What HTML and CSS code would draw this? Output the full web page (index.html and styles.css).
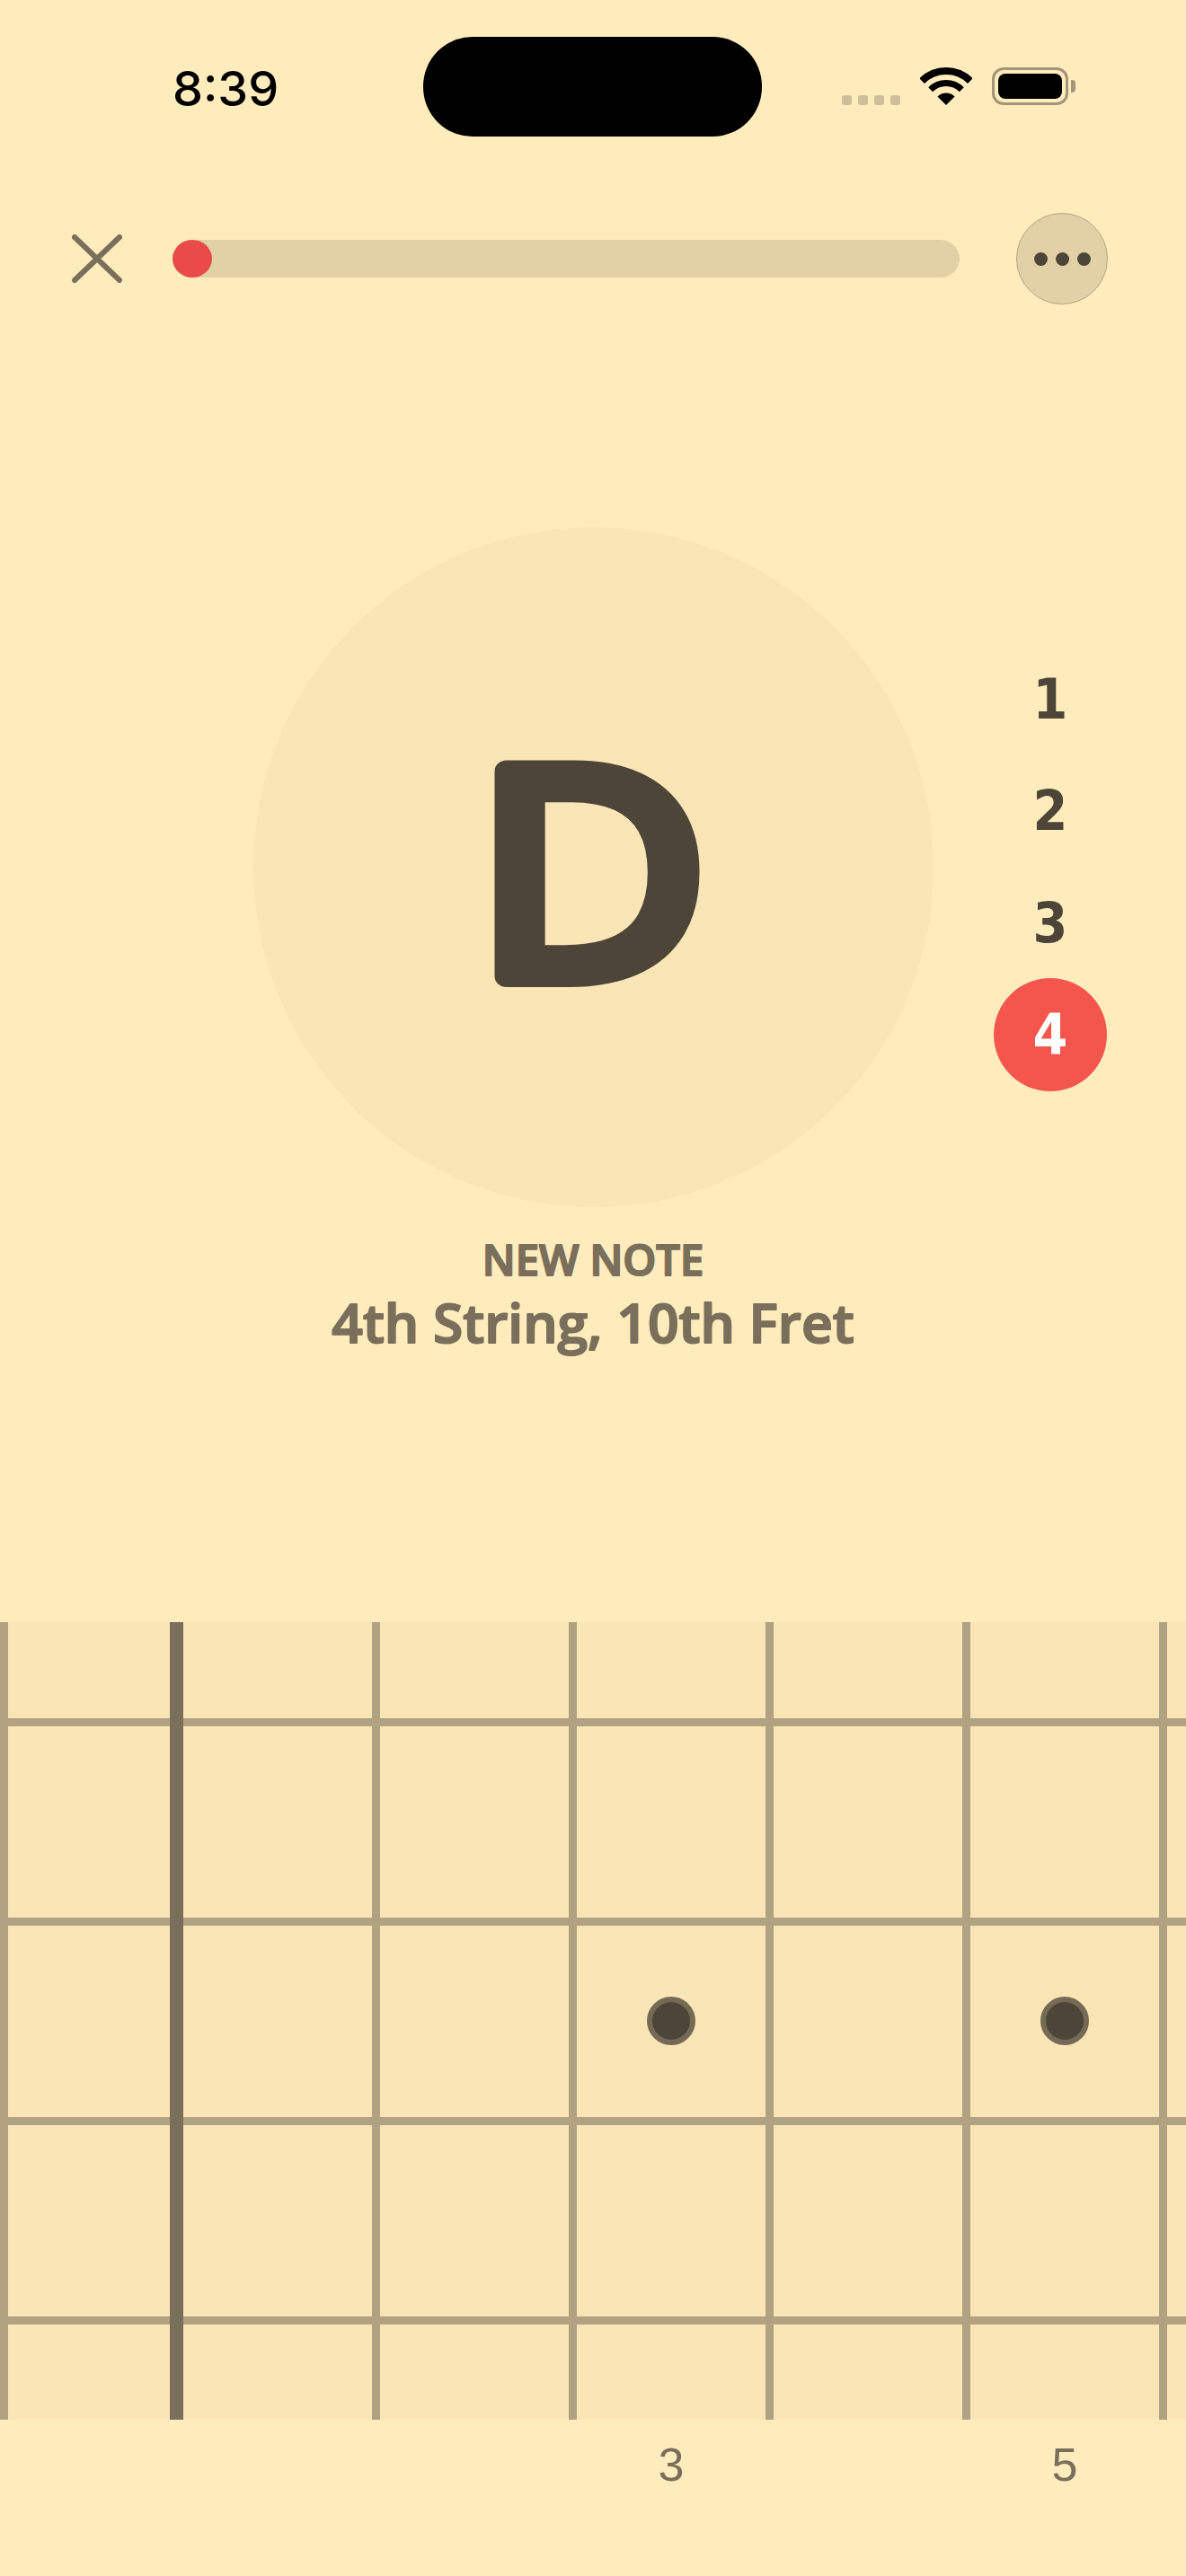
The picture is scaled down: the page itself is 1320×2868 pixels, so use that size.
FILE: index.html
```html
<!DOCTYPE html>
<html lang="en">
<head>
    <meta charset="UTF-8">
    <meta name="viewport" content="width=device-width, initial-scale=1.0">
    <title>Fretboard Trainer</title>
    <link rel="stylesheet" href="styles.css">
</head>
<body>
    <div class="status-bar">
        <div class="time">8:39</div>
        <div class="island"></div>
        <div class="status-icons">
            <div class="signal"><span></span><span></span><span></span><span></span></div>
            <svg class="wifi" viewBox="0 0 58 42">
                <path class="wifi-arc outer" d="M2.13 15.13A38 38 0 0 1 55.87 15.13"/>
                <path class="wifi-arc inner" d="M11.68 24.68A24.5 24.5 0 0 1 46.32 24.68"/>
                <path d="M29 42L19.45 32.45A13.5 13.5 0 0 1 38.55 32.45Z"/>
            </svg>
            <div class="battery"><div class="battery-fill"></div></div>
            <div class="battery-cap"></div>
        </div>
    </div>

    <div class="top-bar">
        <svg class="close" viewBox="0 0 56 54"><path d="M3 3L53 51M53 3L3 51"/></svg>
        <div class="progress"><div class="progress-dot"></div></div>
        <div class="more"><span></span><span></span><span></span></div>
    </div>

    <div class="main">
        <div class="note-row">
            <div class="note-circle">
                <svg class="note-letter" viewBox="0 0 757 757"><text transform="translate(376 500) scale(1.11 1)">D</text></svg>
            </div>
            <div class="string-list">
                <div class="string-num">1</div>
                <div class="string-num">2</div>
                <div class="string-num">3</div>
                <div class="string-num active">4</div>
            </div>
        </div>
        <svg class="note-text" viewBox="0 0 760 160">
            <text class="note-kind" x="380" y="50">NEW NOTE</text>
            <text class="note-place" x="380" y="125">4th String, 10th Fret</text>
        </svg>
    </div>

    <div class="fretboard">
        <div class="strings"><div></div><div></div><div></div><div></div></div>
        <div class="frets">
            <div class="open"></div>
            <div class="nut"></div>
            <div class="fret"></div>
            <div class="fret"></div>
            <div class="fret"><div class="inlay"></div></div>
            <div class="fret"></div>
            <div class="fret"><div class="inlay"></div></div>
            <div class="fret"></div>
        </div>
    </div>

    <div class="fret-numbers">
        <div class="fret-num">3</div>
        <div class="fret-num"></div>
        <div class="fret-num">5</div>
    </div>
</body>
</html>
```

FILE: styles.css
```css
* { box-sizing: border-box; margin: 0; padding: 0; }
html, body { width: 1320px; height: 2868px; overflow: hidden; }
body { background: #ffecbd; font-family: "Open Sans", sans-serif; display: flex; flex-direction: column; }

.status-bar { display: grid; grid-template-columns: 471px 377px 1fr; height: 152px; padding-top: 41px; }
.time { padding: 26px 0 0 192px; font: 500 54px/64px Inter, sans-serif; color: #000; }
.island { background: #000; height: 111px; border-radius: 55px; }
.status-icons { display: flex; align-items: flex-start; padding-top: 34px; }
.signal { display: flex; gap: 7px; margin: 31px 0 0 89px; }
.signal span { width: 11px; height: 11px; border-radius: 3px; background: #cfbf98; }
.wifi { width: 58px; height: 42px; margin-left: 22px; fill: #000; }
.wifi-arc { fill: none; stroke: #000; }
.wifi-arc.outer { stroke-width: 8; }
.wifi-arc.inner { stroke-width: 7; }
.battery { width: 85px; height: 42px; margin-left: 22px; border: 3px solid #a3947a; border-radius: 13px; padding: 4px; background: #ffecbd; }
.battery-fill { height: 100%; background: #000; border-radius: 8px; }
.battery-cap { width: 5px; height: 14px; margin: 14px 0 0 3px; background: #a3947a; border-radius: 0 4px 4px 0; }

.top-bar { display: flex; align-items: center; height: 102px; margin-top: 85px; padding: 0 87px 0 80px; }
.close { width: 56px; height: 54px; flex: none; fill: none; stroke: #7a6f5a; stroke-width: 6; stroke-linecap: round; }
.progress { flex: 1; height: 42px; margin: 0 63px 0 56px; background: #e2d1a6; border-radius: 21px; }
.progress-dot { width: 44px; height: 42px; background: #e94b4b; border-radius: 50%; }
.more { width: 102px; height: 102px; flex: none; display: flex; align-items: center; justify-content: center; gap: 9px; background: #e2d1a6; border: 1px solid #b5a685; border-radius: 50%; }
.more span { width: 15px; height: 15px; background: #4d4537; border-radius: 50%; }

.main { flex: 1; display: flex; flex-direction: column; align-items: center; padding-top: 248px; }
.note-row { display: grid; grid-template-columns: 824px 126px; align-items: center; width: 100%; padding-left: 282px; }
.note-circle { width: 757px; height: 757px; background: #f9e5b5; border-radius: 50%; }
.note-letter { display: block; width: 757px; height: 757px; }
.note-letter text { font-family: "Open Sans", sans-serif; font-size: 320px; font-weight: 400; text-anchor: middle; fill: #4d4537; stroke: #4d4537; stroke-width: 24px; stroke-linejoin: round; }
.string-list { display: flex; flex-direction: column; }
.string-num { width: 126px; height: 126px; display: flex; align-items: center; justify-content: center; font: 700 62px/1 "DejaVu Sans", sans-serif; font-stretch: condensed; color: #4d4537; border-radius: 50%; }
.string-num + .string-num { margin-top: -1.5px; }
.string-num.active { background: #f4554d; color: #fff; }
.note-text { display: block; width: 760px; height: 160px; margin-top: 26px; flex: none; }
.note-text text { font-family: "Open Sans", sans-serif; font-weight: 600; text-anchor: middle; fill: #7a6f5a; stroke: #7a6f5a; stroke-width: 2px; stroke-linejoin: round; }
.note-kind { font-size: 47px; }
.note-place { font-size: 60.5px; }

.fretboard { position: relative; height: 888px; background: #f9e5b5; overflow: hidden; flex: none; }
.strings { position: absolute; inset: 0; display: flex; flex-direction: column; justify-content: space-around; }
.strings div { height: 9px; background: #b1a281; }
.frets { position: relative; display: flex; height: 100%; }
.open { width: 189px; flex: none; border-left: 9px solid #b1a281; }
.nut { width: 15px; flex: none; background: #7a6f5a; }
.fret { width: 219px; flex: none; display: flex; align-items: center; justify-content: center; border-right: 9px solid #b1a281; }
.inlay { width: 54px; height: 54px; background: #4d4537; border: 6px solid #756a55; border-radius: 50%; }

.fret-numbers { display: flex; height: 174px; flex: none; padding: 20px 0 0 642px; }
.fret-num { width: 219px; padding-right: 9px; text-align: center; font: 400 52px/60px "Liberation Sans", sans-serif; color: #7a6f5a; }
```
